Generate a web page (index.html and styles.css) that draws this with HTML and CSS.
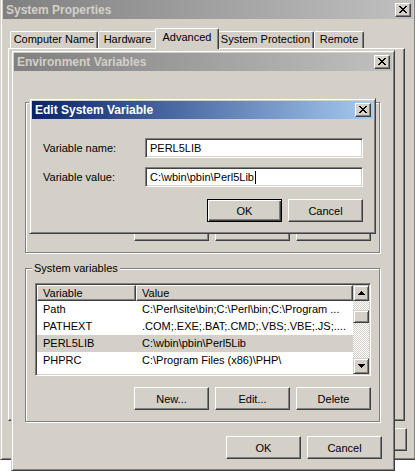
FILE: index.html
```html
<!DOCTYPE html>
<html>
<head>
<meta charset="utf-8">
<title>Environment Variables</title>
<link rel="stylesheet" href="styles.css">
</head>
<body>
<div class="win sp">
  <div class="title inactive title-sp">
    <span class="title-text">System Properties</span>
    <div class="close"><svg width="8" height="7" viewBox="0 0 8 7"><path d="M0 0h2v1H0zM6 0h2v1H6zM1 1h2v1H1zM5 1h2v1H5zM2 2h4v1H2zM3 3h2v1H3zM2 4h4v1H2zM1 5h2v1H1zM5 5h2v1H5zM0 6h2v1H0zM6 6h2v1H6z" fill="#000"/></svg></div>
  </div>
  <div class="tabs">
    <div class="tab tab-cn">Computer Name</div>
    <div class="tab tab-hw">Hardware</div>
    <div class="tab tab-adv sel">Advanced</div>
    <div class="tab tab-spr">System Protection</div>
    <div class="tab tab-rem">Remote</div>
  </div>
  <div class="panel"></div>
  <div class="sp-buttons">
    <div class="btn">OK</div>
    <div class="btn">Cancel</div>
    <div class="btn">Apply</div>
  </div>
</div>

<div class="win env">
  <div class="title inactive">
    <span class="title-text">Environment Variables</span>
    <div class="close"><svg width="8" height="7" viewBox="0 0 8 7"><path d="M0 0h2v1H0zM6 0h2v1H6zM1 1h2v1H1zM5 1h2v1H5zM2 2h4v1H2zM3 3h2v1H3zM2 4h4v1H2zM1 5h2v1H1zM5 5h2v1H5zM0 6h2v1H0zM6 6h2v1H6z" fill="#000"/></svg></div>
  </div>
  <div class="env-body">
    <div class="group group-user">
      <span class="group-label">User variables for Administrator</span>
      <div class="list list-user">
        <div class="list-main">
          <div class="lv-head"><div class="hc c1"></div><div class="hc c2"></div></div>
        </div>
      </div>
      <div class="btn-row">
        <div class="btn">New...</div>
        <div class="btn">Edit...</div>
        <div class="btn">Delete</div>
      </div>
    </div>
    <div class="group group-sys">
      <span class="group-label">System variables</span>
      <div class="list">
        <div class="list-main">
          <div class="lv-head"><div class="hc c1">Variable</div><div class="hc c2">Value</div></div>
          <div class="lv-row"><span class="c1">Path</span><span class="c2">C:\Perl\site\bin;C:\Perl\bin;C:\Program ...</span></div>
          <div class="lv-row"><span class="c1">PATHEXT</span><span class="c2">.COM;.EXE;.BAT;.CMD;.VBS;.VBE;.JS;....</span></div>
          <div class="lv-row selected"><span class="c1">PERL5LIB</span><span class="c2">C:\wbin\pbin\Perl5Lib</span></div>
          <div class="lv-row"><span class="c1">PHPRC</span><span class="c2">C:\Program Files (x86)\PHP\</span></div>
        </div>
        <div class="vscroll">
          <div class="sb-btn"><svg width="7" height="4" viewBox="0 0 7 4"><path d="M3 0h1v1H3zM2 1h3v1H2zM1 2h5v1H1zM0 3h7v1H0z" fill="#000"/></svg></div>
          <div class="sb-track sb-gap"></div>
          <div class="sb-thumb"></div>
          <div class="sb-track sb-rest"></div>
          <div class="sb-btn"><svg width="7" height="4" viewBox="0 0 7 4"><path d="M0 0h7v1H0zM1 1h5v1H1zM2 2h3v1H2zM3 3h1v1H3z" fill="#000"/></svg></div>
        </div>
      </div>
      <div class="btn-row">
        <div class="btn">New...</div>
        <div class="btn">Edit...</div>
        <div class="btn">Delete</div>
      </div>
    </div>
    <div class="dlg-buttons">
      <div class="btn">OK</div>
      <div class="btn">Cancel</div>
    </div>
  </div>
</div>

<div class="win edit">
  <div class="title active">
    <span class="title-text">Edit System Variable</span>
    <div class="close"><svg width="8" height="7" viewBox="0 0 8 7"><path d="M0 0h2v1H0zM6 0h2v1H6zM1 1h2v1H1zM5 1h2v1H5zM2 2h4v1H2zM3 3h2v1H3zM2 4h4v1H2zM1 5h2v1H1zM5 5h2v1H5zM0 6h2v1H0zM6 6h2v1H6z" fill="#000"/></svg></div>
  </div>
  <div class="edit-body">
    <div class="form">
      <label class="lbl">Variable name:</label>
      <div class="field">PERL5LIB</div>
      <label class="lbl">Variable value:</label>
      <div class="field">C:\wbin\pbin\Perl5Lib<span class="caret"></span></div>
    </div>
    <div class="edit-buttons">
      <div class="btn default">OK</div>
      <div class="btn">Cancel</div>
    </div>
  </div>
</div>
</body>
</html>
```
FILE: styles.css
```css
* { box-sizing: border-box; }
html, body { margin: 0; padding: 0; }
body {
  width: 415px;
  height: 472px;
  overflow: hidden;
  position: relative;
  background: #ffffff;
  font-family: "Liberation Sans", Arial, sans-serif;
  font-size: 11px;
  color: #000;
}

/* classic window frame */
.win {
  position: absolute;
  display: flex;
  flex-direction: column;
  background: #d4d0c8;
  border: 1px solid;
  border-color: #d4d0c8 #404040 #404040 #d4d0c8;
  box-shadow: inset 1px 1px #ffffff, inset -1px -1px #808080;
  padding: 2px;
}
.sp { left: 0; top: -3px; width: 416px; height: 463px; }
.env { left: 11px; top: 50px; width: 384px; height: 421px; }
.edit { left: 29px; top: 98px; width: 347px; height: 136px; }

.title {
  flex: none;
  height: 18px;
  display: flex;
  align-items: center;
  justify-content: space-between;
  padding: 0 2px 0 2px;
  font-weight: bold;
  font-size: 12px;
}
.title-sp { height: 19px; }
.title-text { padding-left: 1px; white-space: nowrap; }
.title.inactive { background: linear-gradient(to right, #808080, #c0c0c0); color: #d4d0c8; }
.title.active { background: linear-gradient(to right, #0a246a, #a6caf0); color: #ffffff; }

.close {
  width: 16px;
  height: 14px;
  background: #d4d0c8;
  border: 1px solid;
  border-color: #ffffff #404040 #404040 #ffffff;
  box-shadow: inset -1px -1px #808080;
  display: flex;
  align-items: center;
  justify-content: center;
  padding: 0 1px 1px 0;
}
.close svg { display: block; }

/* tabs */
.tabs {
  flex: none;
  display: flex;
  align-items: flex-end;
  height: 21px;
  margin: 9px 0 -1px 7px;
  position: relative;
  z-index: 1;
}
.tab {
  height: 17px;
  margin-bottom: 1px;
  background: #d4d0c8;
  border-left: 1px solid #ffffff;
  border-top: 1px solid #ffffff;
  border-right: 1px solid #404040;
  box-shadow: inset -1px 0 #808080;
  border-radius: 2px 2px 0 0;
  text-align: center;
  line-height: 15px;
  white-space: nowrap;
}
.tab-cn { width: 88px; }
.tab-hw { width: 59px; }
.tab-adv { width: 60px; }
.tab-spr { width: 97px; }
.tab-rem { width: 50px; }
.tab.sel {
  width: 64px;
  height: 21px;
  margin: 0 -2px;
  line-height: 17px;
  position: relative;
  z-index: 2;
}

.panel {
  flex: none;
  margin-left: 5px;
  width: 397px;
  height: 373px;
  border: 1px solid;
  border-color: #ffffff #404040 #404040 #ffffff;
  box-shadow: inset -1px -1px #808080;
}
.sp-buttons {
  flex: none;
  display: flex;
  justify-content: flex-end;
  gap: 6px;
  margin-top: 7px;
  padding-right: 6px;
}

/* buttons */
.btn {
  flex: none;
  width: 75px;
  height: 23px;
  background: #d4d0c8;
  border: 1px solid;
  border-color: #ffffff #404040 #404040 #ffffff;
  box-shadow: inset -1px -1px #808080;
  display: flex;
  align-items: center;
  justify-content: center;
  white-space: nowrap;
}
.btn.default {
  border: 1px solid #000;
  box-shadow: inset 1px 1px #ffffff, inset -1px -1px #404040, inset -2px -2px #808080;
}

/* environment window */
.env-body {
  flex: 1;
  display: flex;
  flex-direction: column;
  padding: 0 10px 0 11px;
}
.group {
  flex: none;
  position: relative;
  width: 355px;
  height: 154px;
  border: 1px solid #808080;
  box-shadow: inset 1px 1px #ffffff, 1px 1px #ffffff;
  padding: 14px 0 0 9px;
  display: flex;
  flex-direction: column;
}
.group-user { margin-top: 31px; height: 151px; }
.group-sys { margin-top: 15px; }
.group-label {
  position: absolute;
  top: -7px;
  left: 6px;
  padding: 0 2px;
  line-height: 13px;
  background: #d4d0c8;
  white-space: nowrap;
}
.btn-row {
  display: flex;
  justify-content: flex-end;
  gap: 6px;
  margin-top: 11px;
  padding-right: 8px;
}
.dlg-buttons {
  display: flex;
  justify-content: flex-end;
  gap: 6px;
  margin-top: 14px;
}

/* list view */
.list {
  flex: none;
  width: 336px;
  height: 93px;
  background: #ffffff;
  border: 1px solid;
  border-color: #808080 #ffffff #ffffff #808080;
  box-shadow: inset 1px 1px #404040, inset -1px -1px #d4d0c8;
  padding: 1px;
  display: flex;
}
.list-user { height: 90px; }
.list-main { flex: 1; min-width: 0; overflow: hidden; }
.lv-head { display: flex; height: 16px; }
.hc {
  height: 16px;
  background: #d4d0c8;
  border: 1px solid;
  border-color: #ffffff #404040 #404040 #ffffff;
  box-shadow: inset -1px -1px #808080;
  line-height: 14px;
  white-space: nowrap;
}
.hc.c1 { width: 99px; padding-left: 5px; }
.hc.c2 { flex: 1; padding-left: 5px; }
.lv-row { display: flex; height: 17px; line-height: 17px; white-space: nowrap; }
.lv-row .c1 { width: 99px; padding-left: 6px; flex: none; }
.lv-row .c2 { flex: 1; padding-left: 6px; overflow: hidden; }
.lv-row.selected { background: #d4d0c8; }

.vscroll { flex: none; width: 16px; display: flex; flex-direction: column; }
.sb-btn {
  flex: none;
  height: 16px;
  background: #d4d0c8;
  border: 1px solid;
  border-color: #d4d0c8 #404040 #404040 #d4d0c8;
  box-shadow: inset 1px 1px #ffffff, inset -1px -1px #808080;
  display: flex;
  align-items: center;
  justify-content: center;
}
.sb-btn svg { display: block; }
.sb-track { background: repeating-conic-gradient(#ffffff 0 25%, #d4d0c8 0 50%) 0 0 / 2px 2px; }
.sb-gap { flex: none; height: 9px; }
.sb-rest { flex: 1; }
.sb-thumb {
  flex: none;
  height: 13px;
  background: #d4d0c8;
  border: 1px solid;
  border-color: #d4d0c8 #404040 #404040 #d4d0c8;
  box-shadow: inset 1px 1px #ffffff, inset -1px -1px #808080;
}

/* edit window */
.edit-body {
  flex: 1;
  padding: 19px 10px 0 11px;
  display: flex;
  flex-direction: column;
}
.form {
  display: grid;
  grid-template-columns: 102px 218px;
  grid-auto-rows: 20px;
  row-gap: 9px;
  align-items: center;
}
.field {
  height: 20px;
  background: #ffffff;
  border: 1px solid;
  border-color: #808080 #ffffff #ffffff #808080;
  box-shadow: inset 1px 1px #404040, inset -1px -1px #d4d0c8;
  padding-left: 4px;
  line-height: 18px;
  white-space: nowrap;
  display: flex;
  align-items: center;
}
.caret { display: inline-block; width: 1px; height: 13px; background: #000; margin-left: 1px; }
.edit-buttons {
  display: flex;
  justify-content: flex-end;
  gap: 6px;
  margin-top: 12px;
}
```
